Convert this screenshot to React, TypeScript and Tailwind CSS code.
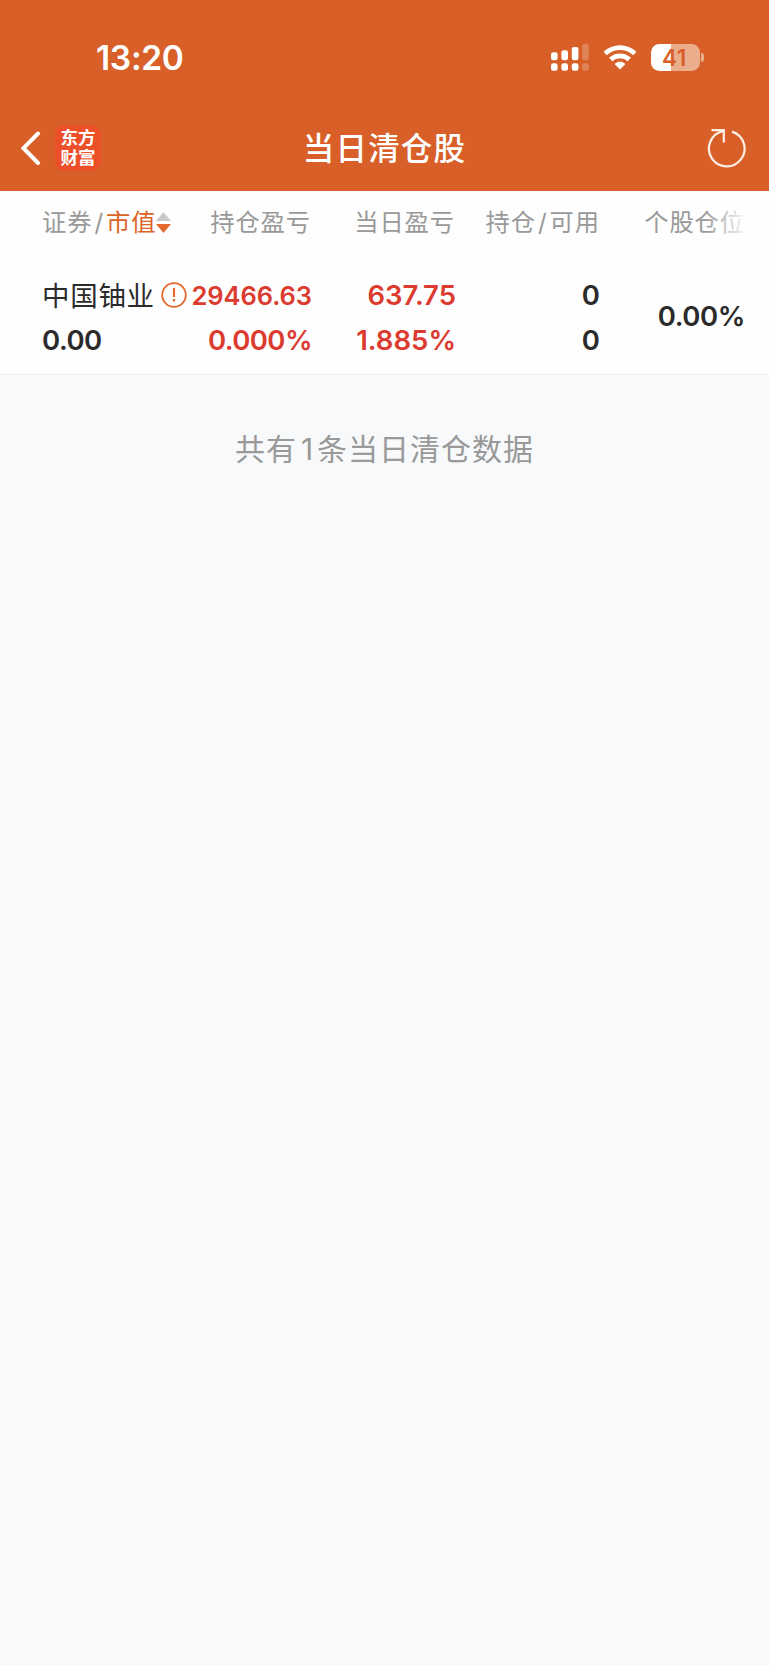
type Cell = { width: string; top: string; bottom?: string; color: string; topClass?: string; bottomClass?: string };

const cells: Cell[] = [
  {
    width: "w-[126px]",
    top: "29466.63",
    bottom: "0.000%",
    color: "text-[#dc3b30] font-semibold",
    topClass: "text-[25.5px] tracking-[-0.05px]",
    bottomClass: "tracking-[-0.55px]",
  },
  { width: "w-[144px]", top: "637.75", bottom: "1.885%", color: "text-[#dc3b30] font-semibold" },
  { width: "w-[144px]", top: "0", bottom: "0", color: "text-[#2b2b2b] font-[560]" },
  { width: "w-[145px]", top: "0.00%", color: "text-[#2b2b2b] font-[560] pb-[3px]", topClass: "tracking-[-0.4px]" },
];

export default function App() {
  return (
    <div className="w-[769px] h-[1665px] bg-[#f8f9fb] overflow-hidden font-['Inter','Noto_Sans_CJK_SC',sans-serif]">
      <header className="h-[191px] bg-[#d86028] text-white">
        <StatusBar />
        <NavBar />
      </header>
      <main>
        <section className="h-[184px] bg-[#fefefe] border-b border-[#f0f0f2]">
          <TableHead />
          <HoldingRow />
        </section>
        <p className="mt-[51px] text-center text-[30px] leading-[46px] tracking-[1px] font-normal text-[#999]">
          共有<span className="ml-[4px] mr-[3px]">1</span>条当日清仓数据
        </p>
      </main>
    </div>
  );
}

function StatusBar() {
  return (
    <div className="h-[105px] pt-[38px] pl-[96px] pr-[64px] flex justify-between">
      <span className="text-[33.5px] leading-[40px] font-[560] tracking-[-0.3px]">13:20</span>
      <div className="flex items-start pt-[6px]">
        <svg width="39" height="28" viewBox="0 0 39 28" fill="#fff">
          <rect x="0" y="8.2" width="6.6" height="8" rx="2.2" />
          <rect x="10.4" y="6.2" width="6.6" height="10" rx="2.2" />
          <rect x="20.8" y="3" width="6.6" height="13.2" rx="2.2" />
          <rect x="31.2" y="0" width="6.6" height="16.2" rx="2.2" opacity="0.22" />
          <rect x="0" y="19.2" width="6.6" height="7.6" rx="2.2" />
          <rect x="10.4" y="19.2" width="6.6" height="7.6" rx="2.2" />
          <rect x="20.8" y="19.2" width="6.6" height="7.6" rx="2.2" />
          <rect x="31.2" y="19.2" width="6.6" height="7.6" rx="2.2" opacity="0.22" />
        </svg>
        <svg className="ml-[13px]" width="34" height="28" viewBox="0 0 34 28" fill="none" stroke="#fff" strokeWidth="4.8">
          <path d="M2.2 9.5a21.5 21.5 0 0 1 29.6 0" />
          <path d="M7.7 15.6a13.7 13.7 0 0 1 18.6 0" />
          <path d="M17 25.4l-5-4.9q-.4-.6.2-1.1a7.6 7.6 0 0 1 9.6 0q.6.5.2 1.1z" fill="#fff" stroke="none" />
        </svg>
        <div className="ml-[14px] w-[49px] h-[27px] rounded-[8.5px] bg-linear-to-r from-white from-41% to-[#ebae8d] to-41% pr-[2px] text-center text-[22.5px] leading-[27px] font-semibold tracking-[0.5px] text-[#d86028]">
          41
        </div>
        <div className="mt-[9px] mr-[1px] ml-[1px] w-[3px] h-[9px] rounded-r-full bg-[#ebae8d]" />
      </div>
    </div>
  );
}

function NavBar() {
  return (
    <div className="h-[86px] pl-[20px] pr-[20px] flex items-center justify-between">
      <div className="w-[140px] flex items-center">
        <svg width="22" height="36" viewBox="0 0 22 36" fill="none" stroke="#fff" strokeWidth="4" strokeLinecap="round">
          <path d="M18 3.5L3.5 18.2 18 33" strokeLinejoin="miter" />
        </svg>
        <div className="ml-[13px] w-[46px] h-[46px] rounded-[9px] bg-[#ec5029] pt-[3px] text-center text-[17.5px] leading-[19.5px] font-bold">
          <div>东方</div>
          <div>财富</div>
        </div>
      </div>
      <h1 className="pt-[2px] text-[31.5px] leading-[44px] font-medium tracking-[1.2px]">当日清仓股</h1>
      <div className="w-[140px] flex justify-end">
        <svg width="42" height="42" viewBox="0 0 42 42" fill="none" stroke="#fdeee4" strokeWidth="2.2">
          <path d="M25 4.6A17.8 17.8 0 1 1 16 4.2" />
          <path d="M4.5 3.2H16.8V15.5" />
        </svg>
      </div>
    </div>
  );
}

function TableHead() {
  return (
    <div className="relative h-[63px] pl-[42px] flex items-center text-[24.3px] tracking-[0.9px] font-normal text-[#999] whitespace-nowrap">
      <div className="w-[144px] flex items-center">
        证券<span className="mx-[2px]">/</span>
        <span className="text-[#dc6327]">市值</span>
        <svg width="15" height="21" viewBox="0 0 15 21">
          <path d="M7.5 0L15 9H0z" fill="#c9c9c9" />
          <path d="M7.5 21L15 12H0z" fill="#e5682e" />
        </svg>
      </div>
      <div className="w-[125px] text-right">持仓盈亏</div>
      <div className="w-[144px] text-right">当日盈亏</div>
      <div className="w-[145px] text-right">持仓<span className="mx-[2px]">/</span>可用</div>
      <div className="w-[145px] text-right">个股仓位</div>
      <div className="absolute right-0 top-0 h-full w-[64px] bg-linear-to-r from-[#fefefe]/0 to-[#fefefe] to-70%" />
    </div>
  );
}

function HoldingRow() {
  return (
    <div className="pl-[42px] pt-[19px] flex text-[27.5px] leading-[45px]">
      <div className="w-[144px] text-[#2b2b2b] whitespace-nowrap">
        <div className="flex items-center">
          <span className="pt-[1px] h-[45px] tracking-[0.7px]">中国铀业</span>
          <svg className="ml-[6px] mb-[2px] shrink-0" width="26" height="26" viewBox="0 0 26 26" fill="none" stroke="#e5682e" strokeWidth="1.8">
            <circle cx="13" cy="13" r="11.8" />
            <path d="M13 6v9M13 17v2.4" strokeWidth="2.2" />
          </svg>
        </div>
        <div className="font-[560] tracking-[-0.5px]">0.00</div>
      </div>
      {cells.map((cell, i) => (
        <div key={i} className={`${cell.width} ${cell.color} h-[90px] flex flex-col justify-center items-end`}>
          <div className={cell.topClass}>{cell.top}</div>
          {cell.bottom && <div className={cell.bottomClass}>{cell.bottom}</div>}
        </div>
      ))}
    </div>
  );
}
